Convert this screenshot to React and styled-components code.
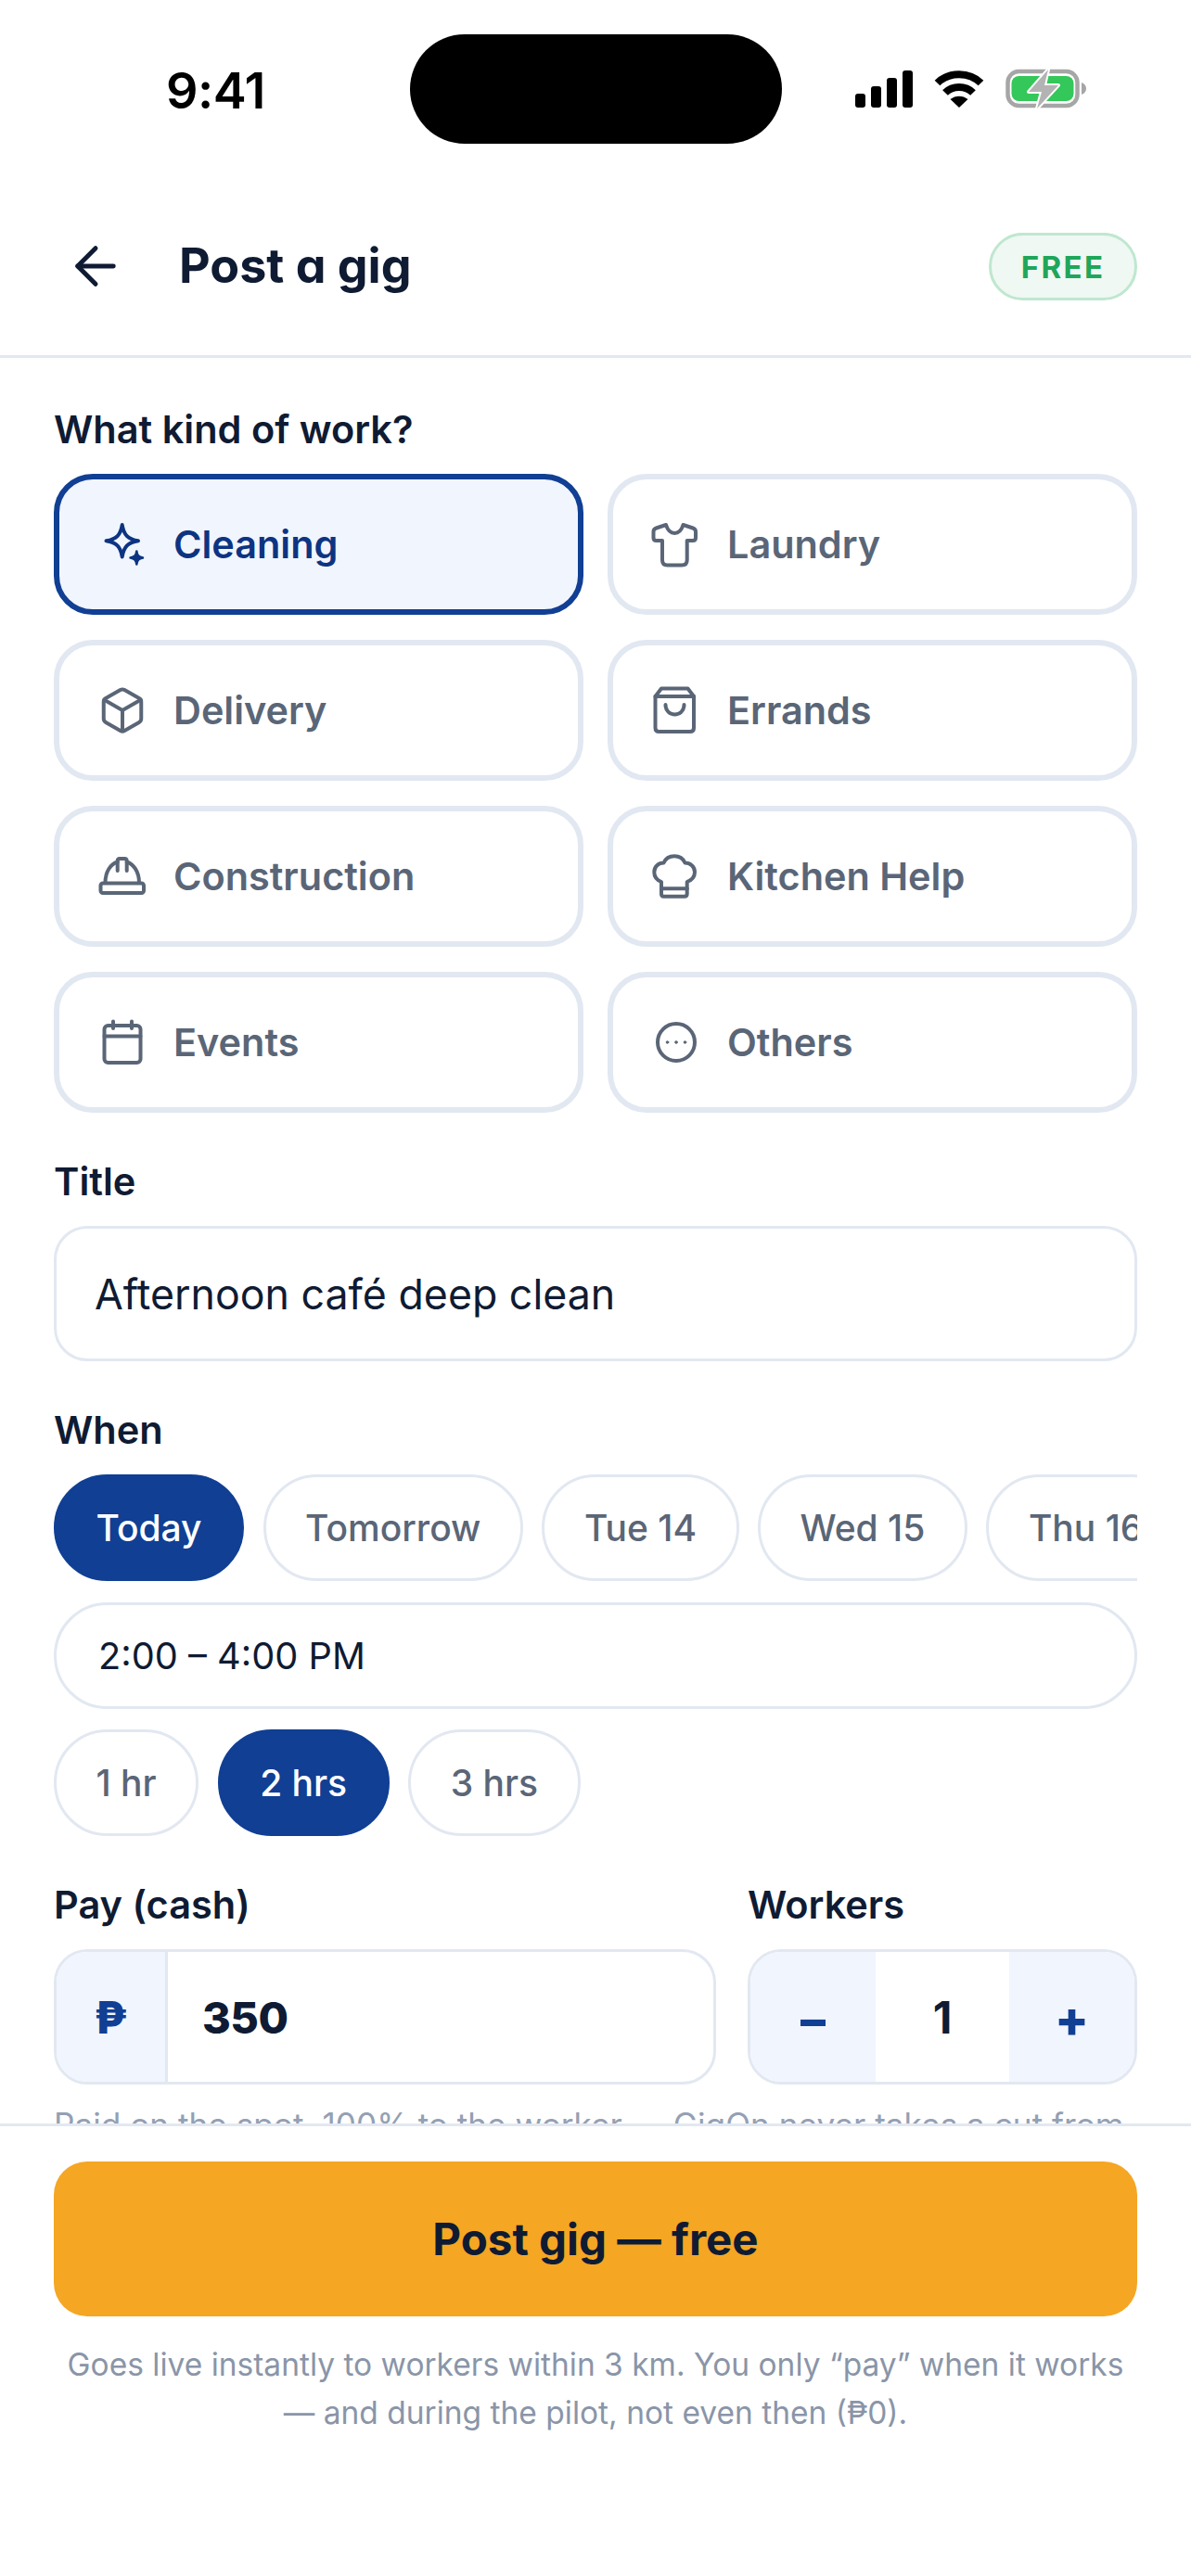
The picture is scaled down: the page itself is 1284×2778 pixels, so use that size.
import React from "react";
import styled, { createGlobalStyle } from "styled-components";

const INK = "#0F1B33";
const NAVY = "#103F94";
const NAVY_TEXT = "#0D3482";
const LINE = "#E2E8F1";
const TINT = "#F1F5FD";
const SLATE = "#5A6677";

const Global = createGlobalStyle`
  html, body { margin: 0; padding: 0; background: #fff; }
  * { box-sizing: border-box; }
  body { font-family: Inter, "Noto Sans", sans-serif; color: ${INK}; }
`;

const Screen = styled.div`
  width: 1284px;
  height: 2778px;
  display: flex;
  flex-direction: column;
  background: #fff;
  overflow: hidden;
`;

const StatusBar = styled.div`
  flex: none;
  height: 190px;
  padding-top: 37px;
  display: grid;
  grid-template-columns: 442px 401px 441px;
  align-items: start;
`;
const Clock = styled.div`
  padding: 2px 0 0 179px;
  height: 118px;
  display: flex;
  align-items: center;
  font-size: 54px;
  font-weight: 600;
  letter-spacing: -0.5px;
  color: #000;
`;
const Island = styled.div`
  height: 118px;
  border-radius: 59px;
  background: #000;
`;
const StatusIcons = styled.div`
  height: 118px;
  padding-left: 79px;
  display: flex;
  align-items: center;
  svg { display: block; flex: none; }
`;

const Nav = styled.header`
  flex: none;
  height: 196px;
  padding: 0 58px;
  display: flex;
  align-items: center;
  border-bottom: 3px solid ${LINE};
`;
const BackButton = styled.button`
  width: 90px;
  height: 90px;
  margin-right: 45px;
  padding: 0;
  border: 0;
  background: none;
  display: flex;
  align-items: center;
  justify-content: center;
  color: ${INK};
`;
const Title = styled.h1`
  flex: 1;
  margin: 0;
  font-size: 52px;
  font-weight: 700;
  font-feature-settings: "cv11" 1;
  color: ${INK};
`;
const FreeBadge = styled.span`
  width: 160px;
  height: 73px;
  margin-top: 2px;
  border-radius: 37px;
  border: 3px solid #BFE7CF;
  background: #EFF8F3;
  color: #1FA65A;
  font-size: 33px;
  font-weight: 700;
  letter-spacing: 2.4px;
  display: flex;
  align-items: center;
  justify-content: center;
`;

const Body = styled.main`
  flex: 1;
  min-height: 0;
  overflow: hidden;
  padding: 51px 58px 0;
  display: flex;
  flex-direction: column;
  gap: 48px;
`;
const Section = styled.section`
  flex: none;
  min-width: 0;
`;
const Label = styled.div`
  height: 54px;
  line-height: 53px;
  margin-bottom: 20px;
  font-size: 41.5px;
  font-weight: 600;
  color: ${INK};
`;
const TileGrid = styled.div`
  display: grid;
  grid-template-columns: 1fr 1fr;
  gap: 27px 26px;
`;
const Tile = styled.button`
  height: 152px;
  padding: 0 0 0 41px;
  border-radius: 42px;
  border: 6px solid ${(p) => (p.$on ? NAVY : LINE)};
  background: ${(p) => (p.$on ? TINT : "#fff")};
  color: ${(p) => (p.$on ? NAVY_TEXT : SLATE)};
  display: flex;
  align-items: center;
  gap: 28px;
  font: 600 41.4px Inter, sans-serif;
  svg { display: block; flex: none; }
`;
const TextField = styled.input`
  display: block;
  width: 100%;
  height: 146px;
  padding: 2px 41px 0;
  border: 3px solid ${LINE};
  border-radius: 36px;
  outline: none;
  background: #fff;
  font: 400 44.7px Inter, sans-serif;
  color: ${INK};
`;
const Stack = styled.div`
  display: flex;
  flex-direction: column;
  gap: 22.5px;
`;
const ChipRow = styled.div`
  display: flex;
  gap: 20.5px;
  overflow: hidden;
`;
const Chip = styled.button`
  flex: none;
  height: 115px;
  padding: 0 42.5px;
  border-radius: 58px;
  border: 3px solid ${(p) => (p.$on ? NAVY : LINE)};
  background: ${(p) => (p.$on ? NAVY : "#fff")};
  color: ${(p) => (p.$on ? "#fff" : SLATE)};
  font: 500 39px Inter, sans-serif;
`;
const TimePill = styled.div`
  height: 115px;
  padding: 0 45px;
  border-radius: 58px;
  border: 3px solid ${LINE};
  display: flex;
  align-items: center;
  font-size: 39.75px;
  font-weight: 400;
  color: ${INK};
`;
const PayRow = styled.div`
  display: grid;
  grid-template-columns: 714px 420px;
  column-gap: 34px;
`;
const Joined = styled.div`
  height: 146px;
  border: 3px solid ${LINE};
  border-radius: 36px;
  overflow: hidden;
  display: flex;
  align-items: stretch;
`;
const Peso = styled.span`
  flex: none;
  width: 120px;
  background: ${TINT};
  border-right: 3px solid ${LINE};
  color: ${NAVY};
  font-size: 48px;
  font-weight: 800;
  display: flex;
  align-items: center;
  justify-content: center;
`;
const Amount = styled.span`
  flex: 1;
  padding-left: 37px;
  display: flex;
  align-items: center;
  font-size: 47px;
  font-weight: 800;
  letter-spacing: -0.5px;
  color: ${INK};
`;
const StepButton = styled.button`
  flex: none;
  width: 135px;
  padding: 4px 0 0;
  border: 0;
  background: ${TINT};
  color: ${NAVY};
  font: 800 54px Inter, sans-serif;
`;
const Count = styled.span`
  flex: 1;
  display: flex;
  align-items: center;
  justify-content: center;
  font-size: 48px;
  font-weight: 700;
  color: ${INK};
`;
const Hint = styled.p`
  margin: -31px 0 0;
  font-size: 35.2px;
  line-height: 52px;
  color: #94A0B3;
`;

const Footer = styled.footer`
  flex: none;
  height: 488px;
  padding: 38px 58px 0;
  border-top: 3px solid ${LINE};
  background: #fff;
`;
const PostButton = styled.button`
  display: block;
  width: 100%;
  height: 167px;
  border: 0;
  border-radius: 36px;
  background: #F5A623;
  color: ${INK};
  font: 700 47.5px Inter, sans-serif;
`;
const Note = styled.p`
  margin: 26px 0 0;
  text-align: center;
  font-size: 33.5px;
  line-height: 52px;
  color: #8A95A8;
`;

const Glyph = ({ children }) => (
  <svg width="54" height="54" viewBox="0 0 54 54" fill="none" stroke="currentColor" strokeWidth="4" strokeLinecap="round" strokeLinejoin="round">
    {children}
  </svg>
);

const Icons = {
  sparkle: (
    <Glyph>
      <path d="M26.7 6C28.5 17 33 21.5 44 23.3 33 25 28.5 29.5 26.7 40.5 25 29.5 20.5 25 9.5 23.3 20.5 21.5 25 17 26.7 6Z" />
      <path d="M42.3 34.5C42.8 39 44.5 40.7 49 41.5 44.5 42.3 42.8 44 42.3 48.5 41.8 44 40 42.3 35.5 41.5 40 40.7 41.8 39 42.3 34.5Z" fill="currentColor" strokeWidth="2.5" />
    </Glyph>
  ),
  shirt: (
    <Glyph>
      <path d="M16 6C18 12.5 21 15 25.3 15 29.5 15 32.5 12.5 34.5 6L45 9.5Q48 10.5 48 13.5V20Q48 23 45 23H38.7V44Q38.7 49.5 33 49.5H17.5Q12 49.5 12 44V23H5.5Q2.5 23 2.5 20V13.5Q2.5 10.5 5.5 9.5Z" />
    </Glyph>
  ),
  box: (
    <Glyph>
      <path d="M47.25 18a4.5 4.5 0 0 0-2.25-3.9L29.25 5.1a4.5 4.5 0 0 0-4.5 0L9 14.1A4.5 4.5 0 0 0 6.75 18v18A4.5 4.5 0 0 0 9 39.9l15.75 9a4.5 4.5 0 0 0 4.5 0L45 39.9a4.5 4.5 0 0 0 2.25-3.9Z" />
      <path d="M7.4 15.75 27 27l19.6-11.25M27 49.5V27" />
    </Glyph>
  ),
  bag: (
    <Glyph>
      <path d="M11 3.5H39.5L46 12V46Q46 50 42 50H8.5Q4.5 50 4.5 46V12Z" />
      <path d="M4.5 12H46" />
      <path d="M15.5 21C15.5 35 35.5 35 35.5 21" />
    </Glyph>
  ),
  hat: (
    <Glyph>
      <rect x="3.5" y="34.5" width="46.5" height="10.5" rx="2.5" />
      <path d="M8.5 34C8.5 22 14 14 21.7 11.5M31.7 11.5C39 14 45 22 45 34" />
      <path d="M21.7 21V10.5Q21.7 8 24 8H29.5Q31.7 8 31.7 10.5V21" />
    </Glyph>
  ),
  chef: (
    <Glyph>
      <path d="M11 33C6 31 3.3 27 3.3 22.5 3.3 16.5 8 12.5 13.5 12.5 15.5 8 20 5.3 25 5.3 30 5.3 34.5 8 36.5 12.5 42 12.5 47 16.5 47 22.5 47 27 44 31 38.7 33V46Q38.7 48.7 36 48.7H13.5Q11 48.7 11 46Z" />
      <path d="M11 40.3H38.7" />
    </Glyph>
  ),
  calendar: (
    <Glyph>
      <rect x="7.5" y="9" width="39" height="40" rx="4" />
      <path d="M7.5 20.5H46.5M17 4.5V12M37 4.5V12" />
    </Glyph>
  ),
  dots: (
    <Glyph>
      <circle cx="27" cy="27" r="20" />
      <circle cx="17.5" cy="27" r="1.3" fill="currentColor" strokeWidth="1" />
      <circle cx="27" cy="27" r="1.3" fill="currentColor" strokeWidth="1" />
      <circle cx="36.5" cy="27" r="1.3" fill="currentColor" strokeWidth="1" />
    </Glyph>
  ),
};

const Signal = () => (
  <svg width="62" height="40" viewBox="0 0 62 40" fill="#000">
    <rect x="0" y="25" width="11" height="15" rx="3" />
    <rect x="17" y="17" width="11" height="23" rx="3" />
    <rect x="34" y="8" width="11" height="32" rx="3" />
    <rect x="51" y="0" width="11" height="40" rx="3" />
  </svg>
);
const WifiMark = styled.svg`
  margin-left: 23px;
`;
const BatteryMark = styled.svg`
  margin-left: 23px;
`;
const Wifi = () => (
  <WifiMark width="54" height="40" viewBox="0 0 54 40">
    <path d="M3.5 13.5C16 1 38 1 50.5 13.5" fill="none" stroke="#000" strokeWidth="8" />
    <path d="M12 24C20 16 34 16 42 24" fill="none" stroke="#000" strokeWidth="8" />
    <path d="M17.5 31C23 26.5 31 26.5 36.5 31L27 40Z" fill="#000" />
  </WifiMark>
);
const Battery = () => (
  <BatteryMark width="88" height="44" viewBox="0 0 88 44">
    <rect x="2.5" y="3" width="75" height="37" rx="12" fill="none" stroke="#A6A6A6" strokeWidth="4.5" />
    <rect x="6.5" y="8" width="67" height="27" rx="8" fill="#34C759" />
    <path d="M82 15C85 16 87 18.5 87 21.5 87 24.5 85 27 82 28Z" fill="#A6A6A6" />
    <path d="M46 1 25 25H39L34 43 57 18H42Z" fill="#B3B3B3" stroke="#fff" strokeWidth="4" strokeLinejoin="round" paintOrder="stroke" />
  </BatteryMark>
);
const BackArrow = () => (
  <svg width="66" height="66" viewBox="0 0 24 24" fill="none" stroke="currentColor" strokeWidth="1.8" strokeLinecap="round" strokeLinejoin="round">
    <path d="m12 19-7-7 7-7" />
    <path d="M19 12H5" />
  </svg>
);

const KINDS = [
  ["sparkle", "Cleaning", true],
  ["shirt", "Laundry"],
  ["box", "Delivery"],
  ["bag", "Errands"],
  ["hat", "Construction"],
  ["chef", "Kitchen Help"],
  ["calendar", "Events"],
  ["dots", "Others"],
];
const DAYS = ["Today", "Tomorrow", "Tue 14", "Wed 15", "Thu 16"];
const SPANS = ["1 hr", "2 hrs", "3 hrs"];

export default function App() {
  return (
    <Screen>
      <Global />
      <StatusBar>
        <Clock>9:41</Clock>
        <Island />
        <StatusIcons>
          <Signal />
          <Wifi />
          <Battery />
        </StatusIcons>
      </StatusBar>
      <Nav>
        <BackButton aria-label="Back">
          <BackArrow />
        </BackButton>
        <Title>Post a gig</Title>
        <FreeBadge>FREE</FreeBadge>
      </Nav>
      <Body>
        <Section>
          <Label>What kind of work?</Label>
          <TileGrid>
            {KINDS.map(([icon, name, on]) => (
              <Tile key={name} $on={on}>
                {Icons[icon]}
                {name}
              </Tile>
            ))}
          </TileGrid>
        </Section>
        <Section>
          <Label>Title</Label>
          <TextField readOnly value="Afternoon café deep clean" />
        </Section>
        <Section>
          <Label>When</Label>
          <Stack>
            <ChipRow>
              {DAYS.map((d, i) => (
                <Chip key={d} $on={i === 0}>{d}</Chip>
              ))}
            </ChipRow>
            <TimePill>2:00 – 4:00 PM</TimePill>
            <ChipRow>
              {SPANS.map((s, i) => (
                <Chip key={s} $on={i === 1}>{s}</Chip>
              ))}
            </ChipRow>
          </Stack>
        </Section>
        <Section>
          <PayRow>
            <div>
              <Label>Pay (cash)</Label>
              <Joined>
                <Peso>₱</Peso>
                <Amount>350</Amount>
              </Joined>
            </div>
            <div>
              <Label>Workers</Label>
              <Joined>
                <StepButton>–</StepButton>
                <Count>1</Count>
                <StepButton>+</StepButton>
              </Joined>
            </div>
          </PayRow>
        </Section>
        <Hint>Paid on the spot. 100% to the worker — GigOn never takes a cut from</Hint>
      </Body>
      <Footer>
        <PostButton>Post gig — free</PostButton>
        <Note>
          Goes live instantly to workers within 3 km. You only “pay” when it works
          <br />— and during the pilot, not even then (₱0).
        </Note>
      </Footer>
    </Screen>
  );
}
